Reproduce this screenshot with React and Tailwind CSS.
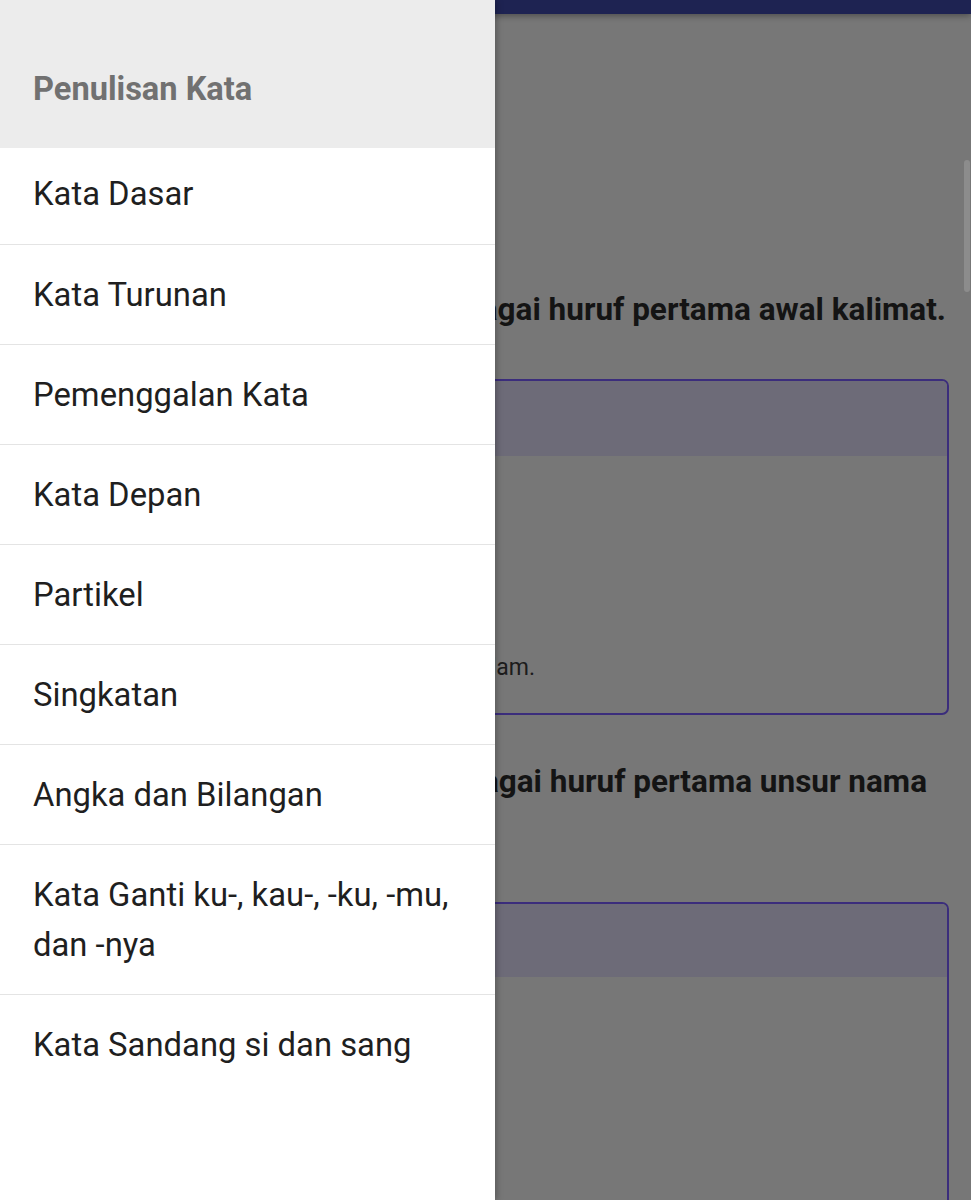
import React from 'react';

const items = [
  'Kata Dasar',
  'Kata Turunan',
  'Pemenggalan Kata',
  'Kata Depan',
  'Partikel',
  'Singkatan',
  'Angka dan Bilangan',
  'Kata Ganti ku-, kau-, -ku, -mu, dan -nya',
  'Kata Sandang si dan sang',
];

const App = () => {
  return (
    <div
      className="relative w-[971px] h-[1200px] overflow-hidden bg-[#777777]"
      style={{ fontFamily: 'Roboto, "Noto Sans", sans-serif' }}
    >
      {/* page behind the drawer, already dimmed by the scrim */}
      <div className="flex flex-col h-full">
        <div className="h-[14px] bg-[#1e2352] shadow-[0_2px_6px_rgba(0,0,0,0.35)] shrink-0" />

        <div className="flex flex-1">
          <div className="flex-1 flex flex-col pl-[23px] pr-[15px]">
            <div className="flex justify-end whitespace-nowrap pr-[3px] mt-[276px] text-[31.5px] font-bold leading-[40px] text-[#141414]">
              1. Huruf kapital dipakai sebagai huruf pertama awal kalimat.
            </div>

            <div className="mt-[49px] h-[336px] border-2 border-[#3b2d7c] rounded-[7px] overflow-hidden flex flex-col">
              <div className="h-[75px] bg-[#6d6b78] shrink-0" />
              <div className="flex-1 flex flex-col justify-end pb-[29px]">
                <div className="w-[510px] flex justify-end whitespace-nowrap text-[23px] leading-[32px] text-[#1c1c1c]">
                  Mereka berangkat ke sekolah pukul tujuh malam.
                </div>
              </div>
            </div>

            <div className="mt-[44px] flex justify-end whitespace-nowrap pr-[22px] text-[31.5px] font-bold leading-[46px] text-[#141414]">
              2. Huruf kapital dipakai sebagai huruf pertama unsur nama
            </div>
            <div className="text-[31.5px] font-bold leading-[46px] text-[#141414]">orang.</div>

            <div className="mt-[51px] h-[320px] border-2 border-[#3b2d7c] rounded-[7px] overflow-hidden flex flex-col">
              <div className="h-[73px] bg-[#6d6b78] shrink-0" />
              <div className="flex-1" />
            </div>
          </div>

          <div className="w-[7px] pt-[146px] shrink-0">
            <div className="w-[6px] h-[132px] rounded-full bg-[#8c8c8c]" />
          </div>
        </div>
      </div>

      {/* navigation drawer */}
      <div className="absolute left-0 top-0 w-[495px] h-full bg-white flex flex-col shadow-[2px_0_6px_rgba(0,0,0,0.25)]">
        <div className="h-[148px] bg-[#ececec] flex items-center pt-[30px] px-[33px] shrink-0">
          <span className="text-[32.6px] font-bold text-[#717171]">Penulisan Kata</span>
        </div>

        <ul>
          {items.map((item, i) => (
            <li
              key={item}
              className={`px-[33px] pr-[40px] text-[32.8px] leading-[50px] text-[#1f1f1f] border-b border-[#e4e4e4] ${
                i === 0 ? 'pt-[21px] pb-[25px]' : 'py-[24.5px]'
              } ${i === items.length - 1 ? 'border-b-0' : ''}`}
            >
              {item}
            </li>
          ))}
        </ul>
      </div>
    </div>
  );
};

export default App;
